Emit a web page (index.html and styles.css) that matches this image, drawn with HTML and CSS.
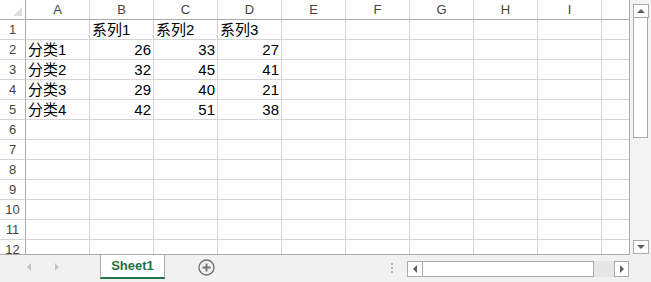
FILE: index.html
```html
<!DOCTYPE html>
<html lang="zh">
<head>
  <meta charset="UTF-8">
  <title>Sheet1</title>
  <link rel="stylesheet" href="styles.css">
</head>
<body>

  <div class="main">
    <div id="sheet" class="sheet"></div>

    <div class="vscroll">
      <div class="sb-btn"><span class="tri-up"></span></div>
      <div class="vthumb"></div>
      <div class="vtrack"></div>
      <div class="sb-btn"><span class="tri-down"></span></div>
    </div>
  </div>

  <div class="tabbar">
    <div class="tab-nav">
      <span class="tri-left light"></span>
      <span class="tri-right light"></span>
    </div>
    <div class="tab">Sheet1</div>
    <div class="add-sheet">
      <svg width="17" height="17" viewBox="0 0 17 17">
        <circle cx="8.5" cy="8.5" r="7.5" fill="none" stroke="#6f6f6f" stroke-width="1.3"/>
        <path d="M8.5 4.5v8M4.5 8.5h8" stroke="#6f6f6f" stroke-width="1.8"/>
      </svg>
    </div>
    <div class="splitter"><i></i><i></i><i></i></div>
    <div class="hscroll">
      <div class="sb-btn"><span class="tri-left"></span></div>
      <div class="hthumb"></div>
      <div class="htrack"></div>
      <div class="sb-btn"><span class="tri-right"></span></div>
    </div>
  </div>

  <script>
    const cols = ['A', 'B', 'C', 'D', 'E', 'F', 'G', 'H', 'I', ''];
    const data = [
      ['', '系列1', '系列2', '系列3'],
      ['分类1', 26, 33, 27],
      ['分类2', 32, 45, 41],
      ['分类3', 29, 40, 21],
      ['分类4', 42, 51, 38]
    ];

    const sheet = document.getElementById('sheet');

    function addCell(text, cls) {
      const el = document.createElement('div');
      el.className = 'cell ' + cls;
      el.textContent = text;
      sheet.appendChild(el);
    }

    addCell('', 'corner');
    cols.forEach((c, i) => addCell(c, 'col-head' + (i === cols.length - 1 ? ' last' : '')));

    for (let r = 0; r < 12; r++) {
      addCell(r + 1, 'row-head');
      const row = data[r] || [];
      cols.forEach((c, i) => {
        const v = row[i] === undefined ? '' : row[i];
        let cls = typeof v === 'number' ? 'num' : 'txt';
        if (i === cols.length - 1) cls += ' last';
        addCell(v, cls);
      });
    }
  </script>

</body>
</html>
```

FILE: styles.css
```css
* {
  box-sizing: border-box;
}

body {
  margin: 0;
  width: 651px;
  height: 282px;
  overflow: hidden;
  background: #fff;
  font-family: "Liberation Sans", "Noto Sans CJK SC", sans-serif;
}

.main {
  display: flex;
  height: 255px;
}

.sheet {
  width: 630px;
  height: 255px;
  overflow: hidden;
  display: grid;
  grid-template-columns: 26px repeat(9, 64px) 27px;
  grid-auto-rows: 20px;
  align-content: start;
  border-right: 1px solid #ababab;
  border-bottom: 1px solid #ababab;
}

.cell {
  border-right: 1px solid #d4d4d4;
  border-bottom: 1px solid #d4d4d4;
  padding: 0 2px;
  font-size: 15px;
  line-height: 20px;
  color: #000;
  white-space: nowrap;
  overflow: hidden;
}

.cell.last {
  border-right: none;
}

.num {
  text-align: right;
}

.col-head,
.row-head {
  text-align: center;
  color: #444;
  font-size: 13px;
  line-height: 19px;
}

.col-head {
  border-bottom-color: #ababab;
}

.row-head {
  border-right-color: #ababab;
  padding: 0;
}

.corner {
  position: relative;
  border-right-color: #ababab;
  border-bottom-color: #ababab;
}

.corner::after {
  content: "";
  position: absolute;
  right: 3px;
  bottom: 3px;
  border-left: 9px solid transparent;
  border-bottom: 9px solid #dfdfdf;
}

/* scrollbars */
.vscroll {
  width: 21px;
  padding: 4px 3px 0 3px;
  background: #f3f3f3;
  display: flex;
  flex-direction: column;
}

.sb-btn {
  width: 16px;
  height: 14px;
  border: 1px solid #ababab;
  background: #fff;
  display: flex;
  align-items: center;
  justify-content: center;
  flex-shrink: 0;
}

.vthumb {
  height: 121px;
  margin-top: -1px;
  border: 1px solid #ababab;
  background: #fff;
}

.vtrack {
  flex: 1;
}

.vscroll .sb-btn:last-child {
  height: 14px;
  margin-bottom: 1px;
}

.tri-up,
.tri-down,
.tri-left,
.tri-right {
  width: 0;
  height: 0;
  border: 4px solid transparent;
}

.tri-up {
  border-top: none;
  border-bottom: 4px solid #606060;
}

.tri-down {
  border-bottom: none;
  border-top: 4px solid #606060;
}

.tri-left {
  border-left: none;
  border-right: 4px solid #606060;
}

.tri-right {
  border-right: none;
  border-left: 4px solid #606060;
}

.tri-left.light {
  border-right-color: #c4c4c4;
}

.tri-right.light {
  border-left-color: #c4c4c4;
}

/* sheet tabs */
.tabbar {
  display: flex;
  height: 27px;
  background: #f1f1f1;
  align-items: flex-start;
}

.tab-nav {
  width: 100px;
  height: 24px;
  display: flex;
  align-items: center;
  padding-left: 27px;
  gap: 24px;
}

.tab {
  width: 65px;
  height: 24px;
  background: #fff;
  border: 1px solid #ababab;
  border-top: none;
  border-bottom: 2px solid #217346;
  color: #217346;
  font-weight: bold;
  font-size: 13px;
  line-height: 22px;
  text-align: center;
}

.add-sheet {
  margin: 4px 0 0 33px;
  height: 17px;
}

.add-sheet svg {
  display: block;
}

.splitter {
  margin: 8px 0 0 176px;
  width: 2px;
  display: flex;
  flex-direction: column;
  gap: 2px;
}

.splitter i {
  width: 2px;
  height: 2px;
  background: #b4b4b4;
}

.hscroll {
  margin: 6px 0 0 14px;
  width: 222px;
  height: 16px;
  display: flex;
}

.hscroll .sb-btn {
  width: 16px;
  height: 16px;
}

.hscroll .sb-btn:last-child {
  width: 15px;
}

.hthumb {
  width: 172px;
  margin-left: -1px;
  border: 1px solid #ababab;
  background: #fff;
}

.htrack {
  flex: 1;
  background: #e6e6e6;
}
```
